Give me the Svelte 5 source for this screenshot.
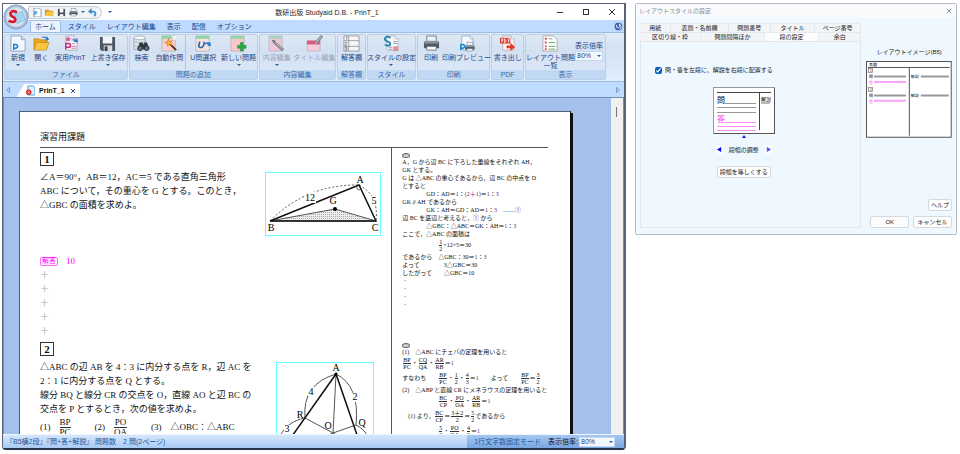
<script lang="ts">
  type Tool = {
    icon: string;
    label: string;
    size: number;
    menu?: boolean;
    disabled?: boolean;
    divided?: boolean;
  };

  type Group = { name: string; tools: Tool[] };

  const menus = ['ホーム', 'スタイル', 'レイアウト編集', '表示', '配信', 'オプション'];

  const groups: Group[] = [
    {
      name: 'ファイル',
      tools: [
        { icon: 'new', label: '新規', size: 26, menu: true },
        { icon: 'open', label: '開く', size: 20 },
        { icon: 'print-t', label: '実用PrinT', size: 38 },
        { icon: 'save', label: '上書き保存', size: 37, menu: true }
      ]
    },
    {
      name: '問題の追加',
      tools: [
        { icon: 'search', label: '検索', size: 24 },
        { icon: 'auto', label: '自動作問', size: 32 },
        { icon: 'unit', label: 'U問選択', size: 34, divided: true },
        { icon: 'add', label: '新しい問題', size: 37, menu: true }
      ]
    },
    {
      name: '内容編集',
      tools: [
        { icon: 'edit', label: '内容編集', size: 34, menu: true, disabled: true },
        { icon: 'title', label: 'タイトル編集', size: 42, disabled: true }
      ]
    },
    { name: '解答欄', tools: [{ icon: 'answer', label: '解答欄', size: 1 }] },
    { name: 'スタイル', tools: [{ icon: 'style', label: 'スタイルの設定', size: 1, menu: true }] },
    {
      name: '印刷',
      tools: [
        { icon: 'printer', label: '印刷', size: 26 },
        { icon: 'preview', label: '印刷プレビュー', size: 46 }
      ]
    },
    { name: 'PDF', tools: [{ icon: 'pdf', label: '書き出し', size: 1 }] },
    { name: '表示', tools: [{ icon: 'list', label: 'レイアウト問題一覧', size: 1 }] }
  ];

  const tabRows = [
    [
      { label: '用紙', size: 31 },
      { label: '表題・名前欄', size: 57 },
      { label: '問題番号', size: 42 },
      { label: 'タイトル', size: 44 },
      { label: 'ページ番号', size: 46 }
    ],
    [
      { label: '区切り線・枠', size: 61 },
      { label: '問題間隔ほか', size: 64 },
      { label: '段の設定', size: 54 },
      { label: '余白', size: 42 }
    ]
  ];

  let activeMenu = $state('ホーム');
  let activeTab = $state('段の設定');
  let zoom = $state('80%');
  let splitColumns = $state(true);
</script>

{#snippet sheet(tint: string, line: string)}
  <path d="M4 1h9l3 3v12H4z" fill={tint} stroke={line} stroke-width=".8" />
  <path d="M13 1v3h3" fill="#fff" stroke={line} stroke-width=".8" />
{/snippet}

{#snippet icon(name: string)}
  <svg class="icon" viewBox="0 0 18 18" aria-hidden="true">
    {#if name === 'new'}
      <path d="M1 1h11l4 4v12H1z" fill="#f4f9ff" stroke="#7a93b5" stroke-width=".8" />
      <path d="M12 1v4h4" fill="#cfe0f3" stroke="#7a93b5" stroke-width=".8" />
      <path d="M4 16v-6h2a2 2 0 0 1 0 4H4" fill="none" stroke="#1686d0" stroke-width="1.6" />
    {:else if name === 'open'}
      <path d="M1 15V4h5l1 1h8v9z" fill="#e8a91c" stroke="#b87a10" stroke-width=".6" />
      <path d="M1 16 4 8h13l-3 8z" fill="#fbc740" stroke="#b87a10" stroke-width=".6" />
      <path d="M8 3q4-3 7 0V1l2 4-4 1 1-2q-3-2-6-1" fill="#2379c9" />
    {:else if name === 'print-t'}
      {@render sheet('#f8f4f8', '#a9a0b5')}
      <path d="M4 15V9h3a2 2 0 0 1 0 4H4" fill="none" stroke="#c5307b" stroke-width="1.6" />
      <path d="M5 3h3v3H5zM9 4h3M11 9h3M10 12h5M10 14h5" fill="#d45c93" stroke="#d45c93" stroke-width=".8" />
      <path d="M9 7q3-4 6-2l1-2 1 5-5-1 1-1q-2-1-4 1" fill="#2379c9" />
    {:else if name === 'save'}
      <path d="M1 2h16v15H3l-2-2z" fill="#4c5662" />
      <path d="M4 2h10v7H4z" fill="#f2f5f8" />
      <path d="M5 11h9v6H5z" fill="#d5dce4" />
      <path d="M6 12h3v5H6z" fill="#38414c" />
    {:else if name === 'search'}
      <path d="M1 3v12q6 3 12 0V3" fill="#dfe4e9" stroke="#8a939c" stroke-width=".7" />
      <ellipse cx="7" cy="3" rx="6" ry="2" fill="#fbfcfd" stroke="#8a939c" stroke-width=".7" />
      <path d="M1 7q6 3 12 0M1 11q6 3 12 0" fill="none" stroke="#9aa4ae" stroke-width=".7" />
      <path d="M7 8h3l1 2 1-2h3l2 7H5z" fill="#303a45" />
      <circle cx="7.5" cy="14" r="2.5" fill="#59728a" stroke="#252c34" />
      <circle cx="14.5" cy="14" r="2.5" fill="#59728a" stroke="#252c34" />
    {:else if name === 'auto'}
      <path d="M1 1h14v16H1z" fill="#f9cfd0" stroke="#98b6a6" stroke-width=".7" />
      <path d="M1 1h14v3H1z" fill="#8ed7a0" />
      <path d="M11 1h5v4h-3z" fill="#eaf5ec" />
      <path d="m9 9 7 7" stroke="#553316" stroke-width="2" />
      <path d="m8 4 1 3 3-1-2 2 2 3-3-1-2 2V9L4 8l3-1z" fill="#ffb828" stroke="#d4571d" stroke-width=".6" />
    {:else if name === 'unit'}
      <path d="M1 1h14v16H1z" fill="#fbe0e2" stroke="#98b6a6" stroke-width=".7" />
      <path d="M1 1h14v3H1z" fill="#8ed7a0" />
      <path d="m5 7-1 4q0 3 3 2 2 0 3-6" fill="none" stroke="#2468a9" stroke-width="1.8" />
      <path d="M10 9q3-2 5-1l1-1 1 5-4-1 1-1q-2-1-3 0" fill="#2379c9" />
    {:else if name === 'add'}
      <path d="M1 1h14v16H1z" fill="#f6c8cc" stroke="#c7a3a8" stroke-width=".7" />
      <path d="M1 1h14v3H1z" fill="#8ed7a0" />
      <path d="M11 8h3v3h3v3h-3v3h-3v-3H8v-3h3z" fill="#24aa43" stroke="#168333" stroke-width=".5" />
    {:else if name === 'edit'}
      <path d="M1 1h14v16H1z" fill="#ecc8d6" stroke="#bbaec3" stroke-width=".7" />
      <path d="M1 1h14v3H1z" fill="#a8d4bd" />
      <path d="m7 8 9 8" stroke="#7e8490" stroke-width="3" />
      <path d="m8 8 7 7" stroke="#d3c9a6" />
      <path d="m4 5 4 1-2 3z" fill="#646b78" />
    {:else if name === 'title'}
      <path d="M1 6h14v11H1z" fill="#f3cdd8" stroke="#bbaec3" stroke-width=".7" />
      <path d="M1 6h14v4H1z" fill="#d9587d" />
      <path d="m10 9 7-8" stroke="#7e8490" stroke-width="3" />
      <path d="m10 9 6-7" stroke="#d8d5cb" />
    {:else if name === 'answer'}
      <path d="M1 1h16v16H1z" fill="#f6f7f8" stroke="#858b93" stroke-width=".8" />
      <path d="M1 6h16M1 12h16M6 1v16" stroke="#858b93" stroke-width=".8" />
      <path d="M3 2h1v3M2 8h2v1L2 11h2M2 13h2v1H3h1v2H2" fill="none" stroke="#555" stroke-width=".7" />
    {:else if name === 'style'}
      {@render sheet('#f5f7f4', '#a9b3bf')}
      <path d="M11 7h4M11 9h4M6 13h4M6 15h4" stroke="#8aa0bb" />
      <path d="M11 12h5v5h-5z" fill="#e98a97" />
      <path d="M8 3Q3 0 2 4q0 2 3 3 4 1 2 4-2 1-5-1" fill="none" stroke="#2382b8" stroke-width="2" />
    {:else if name === 'printer'}
      {@render printer()}
    {:else if name === 'preview'}
      {@render sheet('#f4f9ff', '#8aa0bb')}
      <path d="M3 16v-6h2a2 2 0 0 1 0 4H3" fill="none" stroke="#1686d0" stroke-width="1.6" />
      <g transform="translate(7 7) scale(.62)">{@render printer()}</g>
    {:else if name === 'pdf'}
      {@render sheet('#f9f5f2', '#b7a7a7')}
      <path d="M1 3h11v6H1z" fill="#dc3a2e" />
      <path d="M3 8V4h1v2H3M6 4v4q3-2 0-4m4 4V4h2m-2 2h1" fill="none" stroke="#fff" stroke-width=".8" />
      <path d="M8 11h4V8l5 5-5 4v-3H8z" fill="#e33b31" />
    {:else if name === 'list'}
      <path d="M1 1h11l4 4v12H1z" fill="#fffdfd" stroke="#a9979c" stroke-width=".8" />
      <path d="M3 4h2M3 8h2M3 12h2M3 15h2" stroke="#dd4b57" stroke-width="2" />
      <path d="M7 4h4M7 8h7M7 12h7M7 15h7" stroke="#5ca56d" />
    {/if}
  </svg>
{/snippet}

{#snippet printer()}
  <path d="M4 1h10v6H4z" fill="#edf2f6" stroke="#59636d" stroke-width=".8" />
  <path d="M1 7h16v7H1z" fill="#505a65" />
  <path d="M3 6h12l2 3H1z" fill="#89949f" />
  <path d="M4 12h10v4H4z" fill="#f7f8f9" stroke="#59636d" stroke-width=".8" />
{/snippet}

{#snippet frac(top: string, bottom: string)}
  <span class="frac"><span>{top}</span><span>{bottom}</span></span>
{/snippet}

<main>
  <section class="window" aria-label="PrinT">
    <button class="orb" aria-label="メニュー">
      <svg viewBox="0 0 28 28">
        <defs>
          <radialGradient id="orb">
            <stop offset="0" stop-color="#fff" />
            <stop offset=".7" stop-color="#d9e5f4" />
            <stop offset="1" stop-color="#8da8ca" />
          </radialGradient>
        </defs>
        <circle cx="14" cy="14" r="13" fill="url(#orb)" stroke="#8ba0bd" />
        <path d="m12 10 9-2 3 9-8 4-4-2z" fill="#a4d5ef" stroke="#6eb1d8" stroke-width=".6" />
        <path d="M15 9Q10 6 8 10q0 3 3 4 4 2 1 5-3 1-6-1" fill="none" stroke="#d91b32" stroke-width="3" />
      </svg>
    </button>

    <header class="titlebar">
      <div class="quick">
        <button aria-label="新規作成">
          <svg viewBox="0 0 10 10"><path d="M1 0h6l2 2v8H1z" fill="#fff" stroke="#7a93b5" /><path d="M2 8V4h2v2H2" fill="none" stroke="#1686d0" /></svg>
        </button>
        <button aria-label="ファイルを開く">
          <svg viewBox="0 0 10 10"><path d="M0 9V2h4l1 1h4v6z" fill="#d39417" /><path d="m0 9 2-5h8L8 9z" fill="#fbc740" /></svg>
        </button>
        <button aria-label="保存">
          <svg viewBox="0 0 10 10"><path d="M1 1h8v8H1z" fill="#46515e" /><path d="M3 1h4v4H3zM3 7h4v2H3z" fill="#fff" /></svg>
        </button>
        <button aria-label="プリント">
          <svg viewBox="0 0 18 18">{@render printer()}</svg>
        </button>
        <span class="caret"></span>
        <button aria-label="元に戻す">
          <svg viewBox="0 0 10 10"><path d="M3 4h3q4 1 1 5" fill="none" stroke="#3a8dcb" stroke-width="2" /><path d="M0 4l4-4v7z" fill="#3a8dcb" /></svg>
        </button>
      </div>
      <span class="caret dark"></span>
      <h1>数研出版 Studyaid D.B. - PrinT_1</h1>
      <div class="controls">
        <button aria-label="最小化"><svg viewBox="0 0 8 8"><path d="M1 4.5h6" /></svg></button>
        <button aria-label="最大化"><svg viewBox="0 0 8 8"><rect x="1.5" y="1.5" width="5" height="5" /></svg></button>
        <button aria-label="閉じる"><svg viewBox="0 0 8 8"><path d="m1 1 6 6m0-6L1 7" /></svg></button>
      </div>
    </header>

    <nav class="menus">
      {#each menus as menu}
        <button class:active={activeMenu === menu} onclick={() => (activeMenu = menu)}>{menu}</button>
      {/each}
      <button class="about" aria-label="ヘルプ">
        <svg viewBox="0 0 10 10"><circle cx="5" cy="5" r="4.5" fill="#2759ac" stroke="#b8cae5" /><path d="M3 3v3q2 2 3-1m0 0V2l2 3q0 3-2 3" fill="none" stroke="#fff" /></svg>
      </button>
    </nav>

    <div class="ribbon">
      {#each groups as group}
        <div class="group">
          <div class="tools">
            {#each group.tools as tool}
              <button
                class="tool"
                class:divided={tool.divided}
                disabled={tool.disabled}
                style:flex-grow={tool.size}>
                {@render icon(tool.icon)}
                <span>{#if tool.icon === 'list'}レイアウト問題<br />一覧{:else}{tool.label}{/if}</span>
                {#if tool.menu}<span class="caret"></span>{/if}
              </button>
            {/each}
            {#if group.name === '表示'}
              <label class="scale">
                <span>表示倍率</span>
                <span class="picker">
                  <select bind:value={zoom}><option>80%</option><option>100%</option></select>
                  <span class="caret"></span>
                </span>
              </label>
            {/if}
          </div>
          <div class="caption">{group.name}</div>
        </div>
      {/each}
    </div>

    <div class="files">
      <svg class="nudge" viewBox="0 0 4 6"><path d="M3.5.5v5L.5 3z" /></svg>
      <div class="file">
        <svg viewBox="0 0 10 12">
          <path d="M2 1h6l2 2v8H2z" fill="#d8edff" stroke="#4d9cd6" />
          <circle cx="3" cy="8" r="3" fill="#dc2d30" />
          <path d="m2 7 2 2m0-2L2 9" stroke="#fff" stroke-width=".8" />
        </svg>
        <b>PrinT_1</b>
        <button aria-label="PrinT_1を閉じる"><svg viewBox="0 0 8 8"><path d="m2 2 4 4m0-4L2 6" stroke="#2b5797" /></svg></button>
      </div>
      <svg class="nudge end" viewBox="0 0 4 6"><path d="M.5.5v5l3-2.5z" /></svg>
    </div>

    <div class="desk">
      <article class="paper">
        <h2>演習用課題</h2>

        <div class="row first">
          <div class="left">
            <div class="number">1</div>
            <div class="problem">
              <div class="lines">
                <p>∠A＝90°，AB＝12，AC＝5 である直角三角形</p>
                <p>ABC について，その重心を G とする。このとき，</p>
                <p>△GBC の面積を求めよ。</p>
              </div>
              <svg class="figure" viewBox="0 0 116 64" width="116" height="64">
                <defs>
                  <pattern id="dots" width="2" height="2" patternUnits="userSpaceOnUse">
                    <rect width="2" height="2" fill="#eee" />
                    <rect width="1" height="1" fill="#aaa" />
                  </pattern>
                </defs>
                <rect class="frame" x=".5" y=".5" width="115" height="63" />
                <path d="M5 49 70 37l41 12z" fill="url(#dots)" stroke="#555" />
                <path d="M5 49Q42 12 94 13M94 13q20 10 17 36" fill="none" stroke="#555" stroke-dasharray="2 2" />
                <path d="M5 49 94 13l17 36z" fill="none" stroke="#111" stroke-width="1.5" />
                <path d="m91 14 2 4 4-1" fill="none" stroke="#333" stroke-width=".7" />
                <circle cx="70" cy="37" r="2" />
                <rect class="halo" x="39" y="20" width="12" height="11" />
                <rect class="halo" x="106" y="24" width="6" height="9" />
                <text x="95" y="11">A</text>
                <text x="6" y="59">B</text>
                <text x="110" y="59">C</text>
                <text x="68" y="32">G</text>
                <text x="45" y="29">12</text>
                <text x="109" y="32">5</text>
              </svg>
            </div>
            <div class="answer"><span class="tag">解答</span>10</div>
            {#each { length: 5 } as _}
              <div class="mark">＋</div>
            {/each}
          </div>
          <div class="right">
            <span class="bubble"></span>
            <p>A，G から辺 BC に下ろした垂線をそれぞれ AH，</p>
            <p>GK とする。</p>
            <p>G は △ABC の重心であるから，辺 BC の中点を D</p>
            <p>とすると</p>
            <p class="indent">GD：AD＝<em>1</em>：<em>(2＋1)</em>＝<em>1</em>：<em>3</em></p>
            <p>GK∥AH であるから</p>
            <p class="indent">GK：AH＝GD：AD＝<em>1</em>：<em>3</em>　……<em>①</em></p>
            <p>辺 BC を底辺と考えると，<em>①</em> から</p>
            <p class="indent">△GBC：△ABC＝GK：AH＝<em>1</em>：<em>3</em></p>
            <p>ここで，△ABC の面積は</p>
            <p class="math deep">{@render frac('1', '2')}×12×5＝30</p>
            <p>であるから　△GBC：30＝<em>1</em>：<em>3</em></p>
            <p>よって　　　　3△GBC＝30</p>
            <p>したがって　　△GBC＝10</p>
            <p class="faint">・<br />・<br />・<br />・</p>
          </div>
        </div>

        <div class="row">
          <div class="left">
            <div class="number">2</div>
            <div class="problem">
              <div class="lines">
                <p>△ABC の辺 AB を 4：3 に内分する点を R，辺 AC を</p>
                <p>2：1 に内分する点を Q とする。</p>
                <p>線分 BQ と線分 CR の交点を O，直線 AO と辺 BC の</p>
                <p>交点を P とするとき，次の値を求めよ。</p>
                <p class="parts">
                  <span>(1)　{@render frac('BP', 'PC')}</span>
                  <span>(2)　{@render frac('PO', 'OA')}</span>
                  <span>(3)　△OBC：△ABC</span>
                </p>
              </div>
              <svg class="figure wide" viewBox="0 0 98 96" width="98" height="96">
                <rect class="frame" x=".5" y=".5" width="97" height="95" />
                <path d="M60 12Q26 22 29 56M60 12q24 12 20 51M29 56Q4 60-4 94M80 63q10 4 16 20" fill="none" stroke="#555" />
                <path d="M60 12 57 71 29 56M57 71l23-8M57 71 3 96M57 71l40 24M57 71 56 96" fill="none" stroke="#555" />
                <path d="M2 94 60 12l29 84" fill="none" stroke="#111" stroke-width="1.5" />
                <circle cx="60" cy="12" r="1.5" />
                <rect class="halo" x="32" y="25" width="7" height="9" />
                <rect class="halo" x="76" y="31" width="6" height="9" />
                <rect class="halo" x="8" y="63" width="7" height="8" />
                <text x="60" y="9">A</text>
                <text x="24" y="56">R</text>
                <text x="86" y="64">Q</text>
                <text x="52" y="67">O</text>
                <text x="35" y="33">4</text>
                <text x="79" y="38">2</text>
                <text x="11" y="70">3</text>
              </svg>
            </div>
          </div>
          <div class="right">
            <span class="bubble"></span>
            <p>(1)　△ABC にチェバの定理を用いると</p>
            <p class="math">{@render frac('BP', 'PC')}・{@render frac('CQ', 'QA')}・{@render frac('AR', 'RB')}＝<em>1</em></p>
            <p class="math">すなわち　　{@render frac('BP', 'PC')}・{@render frac('1', '2')}・{@render frac('4', '3')}＝<em>1</em>　　よって　　{@render frac('BP', 'PC')}＝{@render frac('3', '2')}</p>
            <p>(2)　△ABP と直線 CR にメネラウスの定理を用いると</p>
            <p class="math deep">{@render frac('BC', 'CP')}・{@render frac('PO', 'OA')}・{@render frac('AR', 'RB')}＝<em>1</em></p>
            <p class="math">　(1) より，{@render frac('BC', 'CP')}＝{@render frac('3＋2', '2')}＝{@render frac('5', '2')}であるから</p>
            <p class="math deep">{@render frac('5', '2')}・{@render frac('PO', 'OA')}・{@render frac('4', '3')}＝<em>1</em></p>
          </div>
        </div>
      </article>
      <div class="scroll"><span></span></div>
    </div>

    <footer class="status">
      <span class="info">『B5横2段』『問+答+解説』 問題数　2 問(2ページ)</span>
      <div class="mode">
        <span>1行文字数固定モード</span>
        <label>
          表示倍率:
          <span class="picker">
            <select bind:value={zoom}><option>80%</option><option>100%</option></select>
            <span class="caret"></span>
          </span>
        </label>
      </div>
    </footer>
  </section>

  <section class="dialog" aria-label="レイアウトスタイルの設定">
    <header>
      <h2>レイアウトスタイルの設定</h2>
      <button aria-label="ダイアログを閉じる"><svg viewBox="0 0 8 8"><path d="m1 1 6 6m0-6L1 7" /></svg></button>
    </header>

    <div class="content">
      <div class="settings">
        {#each tabRows as row}
          <div class="tabs">
            {#each row as tab}
              <button
                class:active={activeTab === tab.label}
                style:flex-grow={tab.size}
                onclick={() => (activeTab = tab.label)}>{tab.label}</button>
            {/each}
          </div>
        {/each}
        <div class="panel">
          <label class="check">
            <input type="checkbox" bind:checked={splitColumns} />
            問・答を左段に、解説を右段に配置する
          </label>
          <div class="adjust">
            <svg class="preview" viewBox="0 0 62 52" width="62" height="52">
              <rect x=".5" y=".5" width="61" height="46" fill="#fff" stroke="#999" />
              <path d="M1 46.5h61M61.5 1v46" stroke="#555" />
              <path d="M4 5.5h54M46.5 6v37" stroke="#444" />
              <path d="M12 16.5h31M4 20.5h39M4 25.5h39" stroke="#999" />
              <path d="M12 35.5h31M4 39.5h39M4 43.5h39" stroke="#ff8cf5" />
              <path d="M48 16h9" stroke="#bbb" stroke-width="2" />
              <text x="4" y="16" font-size="8">問</text>
              <text x="4" y="35" font-size="8" fill="#f43cf0">答</text>
              <text x="48" y="14" font-size="5">解説</text>
              <path d="m31 48 2 3h-4z" fill="#11f" />
            </svg>
            <div class="stepper">
              <button aria-label="段幅を狭く"><svg viewBox="0 0 6 6"><path d="M5 0v6L0 3z" fill="#00f" /></svg></button>
              <span>段幅の調整</span>
              <button aria-label="段幅を広く"><svg viewBox="0 0 6 6"><path d="M1 0v6l5-3z" fill="#55f" /></svg></button>
            </div>
            <button class="plain">段幅を等しくする</button>
          </div>
        </div>
      </div>

      <aside>
        <h3>レイアウトイメージ(B5)</h3>
        <svg class="layout" viewBox="0 0 86 77">
          <rect x=".5" y=".5" width="85" height="76" fill="#fff" stroke="#555" />
          <path d="M2 6.5h82M43.5 7v68" stroke="#555" />
          <path d="M8 15.5h32M55 15.5h28M8 34.5h32M55 34.5h28" stroke="#999" stroke-width="2" />
          <path d="M8 21h32M8 40h32" stroke="#fca5f8" stroke-width="2" />
          <rect x="2.5" y="7.5" width="4" height="4" fill="#fff" stroke="#777" stroke-width=".7" />
          <rect x="2.5" y="26.5" width="4" height="4" fill="#fff" stroke="#777" stroke-width=".7" />
          <g font-size="4">
            <text x="3" y="5">表題</text>
            <text x="4" y="11" font-size="3">1</text>
            <text x="3" y="17">問</text>
            <text x="3" y="23" fill="#f43cf0">答</text>
            <text x="45" y="17">解説</text>
            <text x="4" y="30" font-size="3">2</text>
            <text x="3" y="36">問</text>
            <text x="3" y="42" fill="#f43cf0">答</text>
            <text x="45" y="36">解説</text>
          </g>
        </svg>
        <div class="actions">
          <button class="plain help">ヘルプ</button>
          <button class="plain">OK</button>
          <button class="plain">キャンセル</button>
        </div>
      </aside>
    </div>
  </section>
</main>

<style>
  :global(body) {
    background: #fff;
  }

  main,
  main * {
    box-sizing: border-box;
  }

  main {
    display: grid;
    grid-template-columns: 624fr 322fr;
    align-items: start;
    gap: 9px;
    padding: 3px 3px 4px 2px;
    font: 7px/9px "Liberation Sans", "Noto Sans CJK JP", sans-serif;
    color: #1d4687;
  }

  button {
    padding: 0;
    border: 0;
    background: none;
    font: inherit;
    color: inherit;
    white-space: nowrap;
  }

  h1,
  h2,
  h3,
  p {
    margin: 0;
    font-weight: normal;
  }

  svg {
    display: block;
  }

  .window {
    position: relative;
    display: flex;
    flex-direction: column;
    min-width: 0;
    height: calc(100vh - 7px);
    border: 1px solid #596574;
    border-right-width: 2px;
    border-bottom: 2px solid #25354b;
    border-radius: 0 0 4px 4px;
    background: #bfdbff;
  }

  .orb {
    position: absolute;
    left: 0;
    top: 0;
    width: 26px;
    height: 26px;
  }

  .titlebar {
    display: flex;
    align-items: center;
    height: 16px;
    padding-left: 25px;
    background: #fff;
    color: #222;
  }

  .quick {
    display: flex;
    align-items: center;
    gap: 3px;
    height: 13px;
    padding: 0 4px;
    border: 1px solid #c4ccd6;
    border-radius: 0 7px 7px 0;
    background: #f0f4f9;
  }

  .quick svg {
    width: 9px;
    height: 9px;
  }

  .caret {
    display: block;
    border: 2px solid transparent;
    border-top-color: #2d5a97;
    border-bottom: 0;
  }

  .caret.dark {
    margin-left: 6px;
  }

  h1 {
    flex: 1;
    padding-right: 14px;
    font-size: 7px;
    text-align: center;
  }

  .controls {
    display: flex;
    gap: 18px;
    padding-right: 8px;
  }

  .controls svg,
  .dialog header svg {
    width: 8px;
    height: 8px;
    fill: none;
    stroke: #333;
  }

  .menus {
    display: flex;
    gap: 3px;
    height: 12px;
    padding-left: 27px;
  }

  .menus button {
    padding: 0 4px;
  }

  .menus .active {
    border: 1px solid #9dbce3;
    border-bottom: 0;
    border-radius: 2px 2px 0 0;
    background: #eaf3fe;
  }

  .menus .about {
    margin-left: auto;
    padding: 0 1px;
  }

  .about svg {
    width: 9px;
    height: 9px;
  }

  .ribbon {
    display: grid;
    grid-template-columns: 125fr 131fr 78fr 29fr 50fr 74fr 33fr 82fr;
    gap: 1px;
    height: 50px;
    padding: 1px 18px 1px 1px;
    border: 1px solid #9dbce3;
    border-width: 1px 0;
    background: linear-gradient(#e4edf8, #d3e2f4 30%, #dfedfc);
  }

  .group {
    display: flex;
    flex-direction: column;
    min-width: 0;
    border: 1px solid #b9d0ea;
    border-radius: 2px;
    background: linear-gradient(#dee8f5, #d3e1f2 35%, #dbe9f9);
  }

  .tools {
    display: flex;
    flex: 1;
    min-height: 0;
  }

  .tool {
    display: flex;
    flex: 1 1 0;
    flex-direction: column;
    align-items: center;
    min-width: 0;
    line-height: 8px;
  }

  .tool:disabled {
    color: #98a3b3;
  }

  .tool .caret {
    margin-top: 2px;
  }

  .divided {
    border-left: 1px solid #afc5df;
  }

  .icon {
    flex: none;
    width: 17px;
    height: 17px;
    margin-bottom: 2px;
  }

  .scale {
    display: flex;
    flex-direction: column;
    gap: 1px;
    padding: 6px 2px 0 0;
  }

  .picker {
    position: relative;
    display: block;
    width: 28px;
    height: 10px;
  }

  .picker select {
    width: 100%;
    height: 100%;
    padding: 0 1px;
    border: 1px solid #c3d8f0;
    background: #f3f8fe;
    appearance: none;
    font: inherit;
    line-height: 8px;
    color: #1d3f7d;
  }

  .picker .caret {
    position: absolute;
    right: 2px;
    top: 4px;
    pointer-events: none;
  }

  .caption {
    height: 9px;
    background: #c0d8f1;
    line-height: 9px;
    text-align: center;
    color: #3e6aaa;
  }

  .files {
    display: flex;
    align-items: end;
    height: 15px;
    padding: 0 4px 0 3px;
  }

  .nudge {
    align-self: center;
    width: 4px;
    height: 6px;
    fill: none;
    stroke: #5883bf;
    stroke-width: .7;
  }

  .nudge.end {
    margin-left: auto;
  }

  .file {
    display: flex;
    align-items: center;
    gap: 4px;
    height: 13px;
    margin-left: 2px;
    padding: 0 3px 0 14px;
    background: linear-gradient(120deg, transparent 10px, #fff 11px);
    color: #111;
  }

  .file > svg {
    width: 9px;
    height: 11px;
  }

  .file button svg {
    width: 8px;
    height: 8px;
  }

  .desk {
    display: flex;
    flex: 1;
    min-height: 0;
    padding-left: 15px;
    border: 1px solid #6f8db5;
    border-bottom: 0;
    overflow: hidden;
    background: #a3c1ea;
  }

  .paper {
    flex: 1;
    min-width: 0;
    height: 400px;
    margin: 13px 40px 0 0;
    padding: 18px 22px 0 20px;
    border: 1px solid #4c5d74;
    border-right-color: #111;
    box-shadow: 2px 2px #111;
    background: #fff;
    font: 9px/14px "Liberation Serif", "Noto Sans CJK JP", serif;
    color: #111;
  }

  .paper h2 {
    height: 18px;
    border-bottom: 1px solid #555;
    font-size: 9px;
  }

  .paper p {
    white-space: nowrap;
  }

  .row {
    display: grid;
    grid-template-columns: 352fr 157fr;
  }

  .row.first {
    min-height: 190px;
  }

  .left {
    min-width: 0;
    padding-top: 4px;
  }

  .number {
    width: 14px;
    height: 14px;
    margin-bottom: 4px;
    border: 1px solid #333;
    font: bold 11px/12px "Liberation Serif", serif;
    text-align: center;
  }

  .problem {
    display: flex;
    justify-content: space-between;
    height: 84px;
  }

  .lines {
    width: 210px;
  }

  .figure {
    flex: none;
    margin: 2px 10px 0 0;
    overflow: hidden;
    font: 10px "Liberation Serif", serif;
    text-anchor: middle;
  }

  .figure.wide {
    margin-right: 17px;
  }

  .frame {
    fill: #fff;
    stroke: #6ff;
  }

  .halo {
    fill: #fff;
  }

  .answer {
    display: flex;
    align-items: center;
    gap: 8px;
    color: #f0f;
  }

  .tag {
    padding: 0 1px;
    border: 1px solid #f6f;
    border-radius: 2px;
    font-size: 7px;
    line-height: 7px;
  }

  .mark {
    color: #aaa;
  }

  .parts {
    display: flex;
    gap: 24px;
    height: 24px;
    line-height: 22px;
  }

  .frac {
    display: inline-flex;
    flex-direction: column;
    vertical-align: middle;
    line-height: 9px;
    text-align: center;
  }

  .frac span:first-child {
    border-bottom: 1px solid #333;
  }

  .right {
    min-width: 0;
    padding: 5px 0 0 10px;
    border-left: 1px solid #555;
    font-size: 6px;
    line-height: 8px;
  }

  .right em {
    font-style: normal;
    color: #6a2472;
  }

  .bubble {
    display: block;
    width: 8px;
    height: 5px;
    border: 1px solid #666;
    border-radius: 50%;
    background: #ccc;
  }

  .indent {
    padding-left: 24px;
  }

  .math {
    height: 15px;
    line-height: 14px;
  }

  .math .frac {
    margin: 0 1px;
    line-height: 6px;
  }

  .deep {
    padding-left: 36px;
  }

  .faint {
    color: #999;
  }

  .scroll {
    width: 12px;
    padding: 9px 5px;
    background: #f0f0f0;
  }

  .scroll span {
    display: block;
    width: 1px;
    height: 10px;
    background: #777;
  }

  .status {
    display: flex;
    align-items: center;
    justify-content: space-between;
    height: 14px;
    padding-left: 3px;
    border-top: 1px solid #eef5ff;
    background: linear-gradient(#d5e6fb, #a9caf3);
    color: #2557a0;
  }

  .mode {
    display: flex;
    align-items: center;
    gap: 7px;
    height: 100%;
    padding: 0 9px 0 7px;
    background: linear-gradient(#a5c8f3, #78a6df);
  }

  .mode label {
    display: flex;
    align-items: center;
    gap: 1px;
    color: #112;
  }

  .mode .picker {
    width: 36px;
  }

  .dialog {
    min-width: 0;
    border: 1px solid #b3bac2;
    border-radius: 2px;
    background: #eff7ff;
    font-size: 6px;
    line-height: 8px;
    color: #222;
  }

  .dialog header {
    display: flex;
    align-items: center;
    justify-content: space-between;
    height: 14px;
    padding: 0 4px 0 3px;
    background: #f8fafc;
    color: #888;
  }

  .dialog header h2 {
    font-size: 6px;
  }

  .dialog header svg {
    width: 6px;
    height: 6px;
    stroke: #777;
  }

  .content {
    display: flex;
    gap: 5px;
    padding: 5px 4px 6px;
  }

  .settings {
    display: flex;
    flex: 222 1 0;
    flex-direction: column;
    min-width: 0;
  }

  .tabs {
    display: flex;
  }

  .tabs button {
    flex: 1 1 0;
    min-width: 0;
    height: 9px;
    border: 1px solid #e5e9ee;
    border-width: 1px 1px 0 0;
    background: #f2f4f6;
    line-height: 8px;
  }

  .tabs .active {
    background: #fcfdff;
  }

  .panel {
    flex: 1;
    padding: 24px 14px 0;
    border: 1px solid #e4e6e8;
  }

  .check {
    display: flex;
    align-items: center;
    gap: 3px;
  }

  .check input {
    width: 7px;
    height: 7px;
    margin: 0;
    accent-color: #0a5fc0;
  }

  .adjust {
    display: flex;
    flex-direction: column;
    align-items: center;
    padding: 13px 14px 0 0;
  }

  .preview,
  .layout {
    font-family: "Noto Sans CJK JP", sans-serif;
  }

  .stepper {
    display: flex;
    align-items: center;
    gap: 5px;
    margin: 6px 0 12px;
  }

  .stepper button {
    padding: 2px;
    border-radius: 1px;
    background: #fafcff;
  }

  .stepper svg {
    width: 5px;
    height: 5px;
  }

  .plain {
    height: 12px;
    padding: 0 2px;
    border: 1px solid #d5d9de;
    border-radius: 2px;
    background: #fdfdfd;
  }

  aside {
    display: flex;
    flex: 86 1 0;
    flex-direction: column;
    min-width: 0;
    padding-top: 25px;
  }

  h3 {
    margin-bottom: 5px;
    font-size: 6px;
    text-align: center;
  }

  .layout {
    width: 100%;
  }

  .actions {
    display: grid;
    grid-template-columns: 1fr 1fr;
    gap: 5px 4px;
    padding: 61px 0 0 4px;
  }

  .help {
    grid-column: 1 / 3;
    justify-self: end;
  }
</style>
